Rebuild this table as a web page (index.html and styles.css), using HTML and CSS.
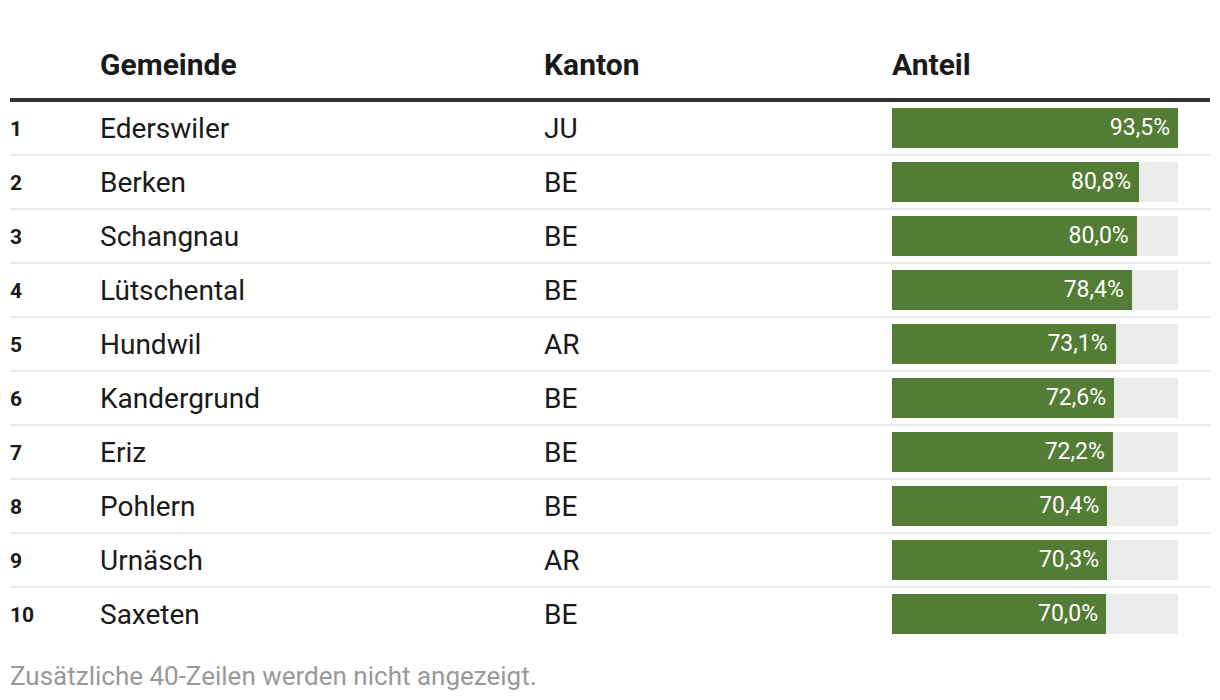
FILE: index.html
```html
<!DOCTYPE html>
<html lang="de">
<head>
<meta charset="utf-8">
<link rel="stylesheet" href="styles.css">
</head>
<body>
<div class="wrap">
  <div class="table">
    <div class="row head">
      <div class="c rank"></div>
      <div class="c name">Gemeinde</div>
      <div class="c kt">Kanton</div>
      <div class="c share">Anteil</div>
    </div>
    <div class="row"><div class="c rank">1</div><div class="c name">Ederswiler</div><div class="c kt">JU</div><div class="c share"><div class="track"><div class="fill" style="width:100%"><span>93,5%</span></div></div></div></div>
    <div class="row"><div class="c rank">2</div><div class="c name">Berken</div><div class="c kt">BE</div><div class="c share"><div class="track"><div class="fill" style="width:86.42%"><span>80,8%</span></div></div></div></div>
    <div class="row"><div class="c rank">3</div><div class="c name">Schangnau</div><div class="c kt">BE</div><div class="c share"><div class="track"><div class="fill" style="width:85.56%"><span>80,0%</span></div></div></div></div>
    <div class="row"><div class="c rank">4</div><div class="c name">Lütschental</div><div class="c kt">BE</div><div class="c share"><div class="track"><div class="fill" style="width:83.85%"><span>78,4%</span></div></div></div></div>
    <div class="row"><div class="c rank">5</div><div class="c name">Hundwil</div><div class="c kt">AR</div><div class="c share"><div class="track"><div class="fill" style="width:78.18%"><span>73,1%</span></div></div></div></div>
    <div class="row"><div class="c rank">6</div><div class="c name">Kandergrund</div><div class="c kt">BE</div><div class="c share"><div class="track"><div class="fill" style="width:77.65%"><span>72,6%</span></div></div></div></div>
    <div class="row"><div class="c rank">7</div><div class="c name">Eriz</div><div class="c kt">BE</div><div class="c share"><div class="track"><div class="fill" style="width:77.22%"><span>72,2%</span></div></div></div></div>
    <div class="row"><div class="c rank">8</div><div class="c name">Pohlern</div><div class="c kt">BE</div><div class="c share"><div class="track"><div class="fill" style="width:75.29%"><span>70,4%</span></div></div></div></div>
    <div class="row"><div class="c rank">9</div><div class="c name">Urnäsch</div><div class="c kt">AR</div><div class="c share"><div class="track"><div class="fill" style="width:75.19%"><span>70,3%</span></div></div></div></div>
    <div class="row last"><div class="c rank">10</div><div class="c name">Saxeten</div><div class="c kt">BE</div><div class="c share"><div class="track"><div class="fill" style="width:74.87%"><span>70,0%</span></div></div></div></div>
  </div>
  <p class="note">Zusätzliche 40-Zeilen werden nicht angezeigt.</p>
</div>
</body>
</html>
```
FILE: styles.css
```css
html, body {
  margin: 0;
  padding: 0;
  background: #ffffff;
}
body {
  font-family: Roboto, "Liberation Sans", sans-serif;
  color: #1a1a1a;
}
.wrap {
  padding: 0 10px;
}
.table {
  display: flex;
  flex-direction: column;
}
.row {
  display: grid;
  grid-template-columns: 90px 444px 348px 1fr;
  align-items: center;
  padding: 6px 0;
  border-bottom: 2px solid #e8e8e8;
}
.row.last {
  border-bottom: none;
}
.row.head {
  padding: 47px 0 15px;
  border-bottom: 4px solid #333333;
}
.c {
  font-size: 28px;
  line-height: 38px;
  padding-top: 2px;
}
.c.rank {
  font-size: 21px;
  font-weight: 700;
}
.c.share {
  padding-top: 0;
  padding-right: 32px;
  line-height: 40px;
}
.head .c,
.head .c.share {
  font-size: 30px;
  font-weight: 700;
  line-height: 36px;
  padding-top: 0;
}
.track {
  height: 40px;
  background: #ececec;
}
.fill {
  height: 40px;
  background: #537c34;
  display: flex;
  justify-content: flex-end;
  align-items: center;
  box-sizing: border-box;
  padding-right: 8px;
}
.fill span {
  color: #ffffff;
  font-size: 23px;
  line-height: 40px;
}
.note {
  margin: 20px 0 0;
  font-size: 26px;
  line-height: 32px;
  color: #999999;
}
```
